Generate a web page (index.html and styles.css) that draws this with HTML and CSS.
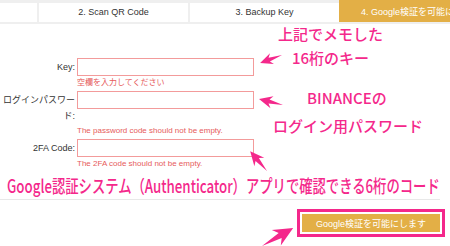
FILE: index.html
```html
<!DOCTYPE html>
<html lang="ja">
<head>
    <meta charset="UTF-8">
    <meta name="viewport" content="width=device-width, initial-scale=1.0">
    <title>Google検証を可能にする</title>
    <link rel="stylesheet" href="styles.css">
</head>
<body>
    <div class="steps">
        <div class="step"></div>
        <div class="step">2. Scan QR Code</div>
        <div class="step">3. Backup Key</div>
        <div class="step step-active">4. Google検証を可能にする</div>
    </div>

    <form class="verify-form">
        <div class="form-row">
            <label class="form-label">Key:</label>
            <input class="form-input" type="text">
        </div>
        <p class="form-error">空欄を入力してください</p>

        <div class="form-row">
            <label class="form-label">ログインパスワード:</label>
            <input class="form-input" type="password">
        </div>
        <p class="form-error">The password code should not be empty.</p>

        <div class="form-row">
            <label class="form-label">2FA Code:</label>
            <input class="form-input" type="text">
        </div>
        <p class="form-error">The 2FA code should not be empty.</p>

        <div class="form-footer">
            <button type="button" class="btn-enable">Google検証を可能にします</button>
        </div>
    </form>

    <!-- annotations drawn over the screenshot -->
    <div class="notes">
        <span class="note note-key1">上記でメモした</span>
        <span class="note note-key2">16桁のキー</span>
        <span class="note note-pw1">BINANCEの</span>
        <span class="note note-pw2">ログイン用パスワード</span>
        <span class="note note-code">Google認証システム（Authenticator）アプリで確認できる6桁のコード</span>

        <svg class="arrows" width="450" height="246" viewBox="0 0 450 246">
            <defs>
                <polygon id="arrow" points="0,0 14,-2 11,-6 24,0 11,6 14,2"/>
            </defs>
            <use href="#arrow" transform="translate(282,55) rotate(160) scale(0.97)"/>
            <use href="#arrow" transform="translate(283,105) rotate(194) scale(1.03)"/>
            <use href="#arrow" transform="translate(267,171) rotate(229.6) scale(1.08)"/>
            <use href="#arrow" transform="translate(262,246) rotate(-30) scale(1.5)"/>
        </svg>
    </div>
</body>
</html>
```

FILE: styles.css
```css
* {
    margin: 0;
    padding: 0;
    box-sizing: border-box;
}

body {
    font-family: 'Liberation Sans', Arial, 'Noto Sans CJK JP', sans-serif;
    background: #fff;
    color: #333;
    width: 450px;
    height: 246px;
    overflow: hidden;
    position: relative;
}

/* step tabs */
.steps {
    display: flex;
    gap: 2px;
    margin-left: -112px;
    padding: 3px 0 2px;
    background: #efefef;
    white-space: nowrap;
}

.step {
    flex: 0 0 149px;
    height: 19px;
    line-height: 19px;
    background: #fff;
    text-align: center;
    font-size: 9px;
    color: #333;
}

.step-active {
    height: 22px;
    margin: -3px 0 0 -2px;
    padding: 3px 0 0 6px;
    background: #e3af46;
    color: #fff;
    overflow: hidden;
}

/* form */
.verify-form {
    padding-top: 34px;
}

.form-row {
    display: flex;
    align-items: flex-start;
    gap: 2px;
    padding-left: 3px;
}

.form-label {
    width: 72px;
    padding-top: 1px;
    font-size: 9px;
    line-height: 16px;
    text-align: right;
    color: #333;
}

.form-input {
    width: 177px;
    height: 18px;
    border: 1px solid #f39b9b;
    background: #fff;
    outline: none;
}

.form-error {
    margin: 1px 0 2px 77px;
    font-size: 8px;
    line-height: 12px;
    color: #e65b5b;
}

.form-footer {
    margin: 29px 10px 0 0;
    padding-top: 14px;
    border-top: 1px solid #e8e8e8;
    display: flex;
    justify-content: flex-end;
}

.btn-enable {
    width: 138px;
    height: 18px;
    border: none;
    background: #e3af46;
    color: #fff;
    font-family: 'Liberation Sans', Arial, 'Noto Sans CJK JP', sans-serif;
    font-size: 9px;
    outline: 3px solid #f4288b;
    outline-offset: 2px;
}

/* annotations */
.notes {
    position: absolute;
    top: 0;
    left: 0;
    width: 450px;
    height: 246px;
    pointer-events: none;
}

.note {
    position: absolute;
    font-family: 'Noto Sans CJK JP', sans-serif;
    font-weight: 500;
    font-size: 15px;
    line-height: 1;
    color: #f4288b;
    white-space: nowrap;
}

.note-key1 { left: 278px; top: 26px; }
.note-key2 { left: 292px; top: 50px; }
.note-pw1 { left: 307px; top: 90px; }
.note-pw2 { left: 273px; top: 118px; }

.note-code {
    left: 7px;
    top: 176px;
    font-size: 18px;
    transform: scaleX(0.74);
    transform-origin: left top;
}

.arrows {
    position: absolute;
    top: 0;
    left: 0;
    fill: #f4288b;
}
```
